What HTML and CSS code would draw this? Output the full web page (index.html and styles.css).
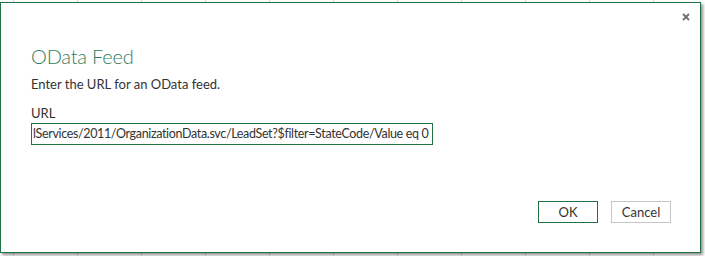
FILE: index.html
```html
<!DOCTYPE html>
<html>
<head>
<meta charset="utf-8">
<link rel="stylesheet" href="styles.css">
</head>
<body>
<div class="sheet">
  <div class="dialog">
    <button class="close" aria-label="Close">
      <svg width="8" height="8" viewBox="0 0 8 8"><path d="M1 1L7 7M7 1L1 7" stroke="#6f6f6f" stroke-width="1.8"/></svg>
    </button>
    <div class="content">
      <h1 class="title">OData Feed</h1>
      <p class="subtitle">Enter the URL for an OData feed.</p>
      <label class="label">URL</label>
      <div class="input">lServices/2011/OrganizationData.svc/LeadSet?$filter=StateCode/Value eq 0</div>
    </div>
    <div class="actions">
      <button class="btn primary">OK</button>
      <button class="btn">Cancel</button>
    </div>
  </div>
</div>
</body>
</html>
```
FILE: styles.css
```css
html, body {
  margin: 0;
  padding: 0;
}
body {
  width: 705px;
  height: 256px;
  overflow: hidden;
  font-family: "Lato", "Open Sans", sans-serif;
  background-color: #ffffff;
  background-image: repeating-linear-gradient(to right, transparent 0, transparent 13px, #d9d9d9 13px, #d9d9d9 14px, transparent 14px, transparent 64px);
}
.sheet {
  padding-top: 2px;
}
.dialog {
  position: relative;
  width: 699px;
  height: 249px;
  background: #fff;
  border: 1px solid #217346;
  box-shadow: 2px 2px 3px rgba(0,0,0,0.45);
  display: flex;
  flex-direction: column;
  justify-content: space-between;
  box-sizing: content-box;
}
.close {
  position: absolute;
  top: 10px;
  right: 10px;
  border: 0;
  background: none;
  padding: 0;
  width: 8px;
  height: 8px;
  display: flex;
}
.content {
  padding: 40px 0 0 30px;
}
.title {
  margin: 0;
  font-weight: 300;
  font-size: 20px;
  letter-spacing: -0.2px;
  line-height: 26px;
  color: #2f7d5c;
}
.subtitle {
  margin: 6px 0 0;
  font-size: 13px;
  line-height: 18px;
  color: #333;
}
.label {
  display: block;
  margin-top: 11px;
  font-size: 13px;
  line-height: 18px;
  color: #333;
}
.input {
  margin-top: 1px;
  width: 399px;
  height: 20px;
  border: 1px solid #217346;
  font-size: 12.5px;
  letter-spacing: -0.35px;
  line-height: 20px;
  color: #333;
  white-space: nowrap;
  overflow: hidden;
  padding-left: 1px;
}
.actions {
  display: flex;
  justify-content: flex-end;
  gap: 13px;
  padding: 0 29px 29px 0;
}
.btn {
  width: 60px;
  height: 22px;
  border: 1px solid #c6c6c6;
  background: #fff;
  font-family: inherit;
  font-size: 13px;
  color: #333;
  padding: 0;
}
.btn.primary {
  border-color: #217346;
}
```
